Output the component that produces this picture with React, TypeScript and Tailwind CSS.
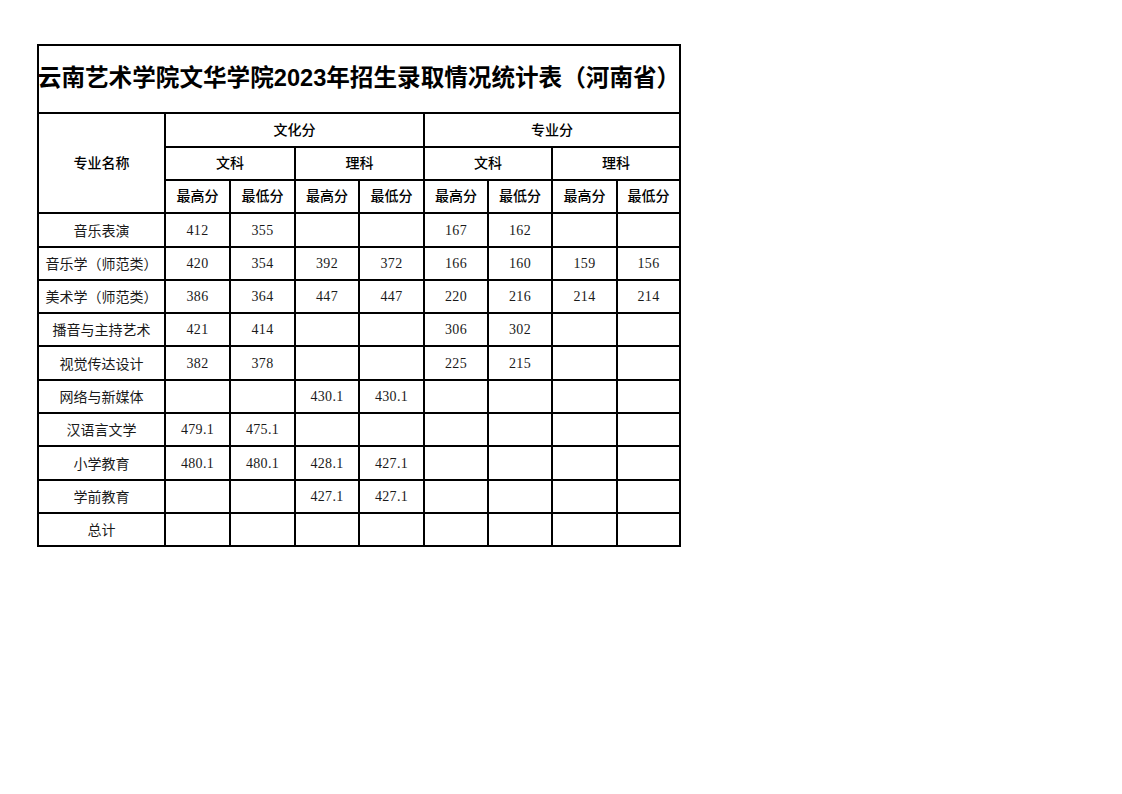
import React from "react";

const rows: [string, string[]][] = [
  ["音乐表演", ["412", "355", "", "", "167", "162", "", ""]],
  ["音乐学（师范类）", ["420", "354", "392", "372", "166", "160", "159", "156"]],
  ["美术学（师范类）", ["386", "364", "447", "447", "220", "216", "214", "214"]],
  ["播音与主持艺术", ["421", "414", "", "", "306", "302", "", ""]],
  ["视觉传达设计", ["382", "378", "", "", "225", "215", "", ""]],
  ["网络与新媒体", ["", "", "430.1", "430.1", "", "", "", ""]],
  ["汉语言文学", ["479.1", "475.1", "", "", "", "", "", ""]],
  ["小学教育", ["480.1", "480.1", "428.1", "427.1", "", "", "", ""]],
  ["学前教育", ["", "", "427.1", "427.1", "", "", "", ""]],
  ["总计", ["", "", "", "", "", "", "", ""]],
];

const head = "bg-white flex items-center justify-center text-[14px] font-medium text-black";
const cell = "bg-white flex items-center justify-center text-[14px] text-[#1a1a1a]";

export default function App() {
  return (
    <div className="min-h-[794px] w-[1122px] bg-white pt-[44px] pl-[37px] font-['Liberation_Sans','Noto_Sans_CJK_SC',sans-serif]">
      <div className="inline-grid grid-cols-[125px_63px_63px_62px_63px_62px_62px_63px_61px] grid-rows-[66px_32px_31px_31px_32px_31px_31px_31px_32px_31px_31px_32px_31px_31px] gap-[2px] bg-black p-[2px]">
        <div className="col-span-9 bg-white flex items-center justify-center whitespace-nowrap text-[23.6px] font-bold text-black">
          云南艺术学院文华学院2023年招生录取情况统计表（河南省）
        </div>

        <div className={`${head} row-span-3`}>专业名称</div>
        <div className={`${head} col-span-4`}>文化分</div>
        <div className={`${head} col-span-4`}>专业分</div>

        <div className={`${head} col-span-2`}>文科</div>
        <div className={`${head} col-span-2`}>理科</div>
        <div className={`${head} col-span-2`}>文科</div>
        <div className={`${head} col-span-2`}>理科</div>

        {["最高分", "最低分", "最高分", "最低分", "最高分", "最低分", "最高分", "最低分"].map((t, i) => (
          <div key={i} className={head}>{t}</div>
        ))}

        {rows.map(([name, vals]) => (
          <React.Fragment key={name}>
            <div className={`${cell} whitespace-nowrap font-['Noto_Sans_CJK_SC',sans-serif]`}>{name}</div>
            {vals.map((v, j) => (
              <div key={j} className={`${cell} font-['Liberation_Serif',serif] text-[14.5px] tracking-[0.3px]`}>{v}</div>
            ))}
          </React.Fragment>
        ))}
      </div>
    </div>
  );
}
